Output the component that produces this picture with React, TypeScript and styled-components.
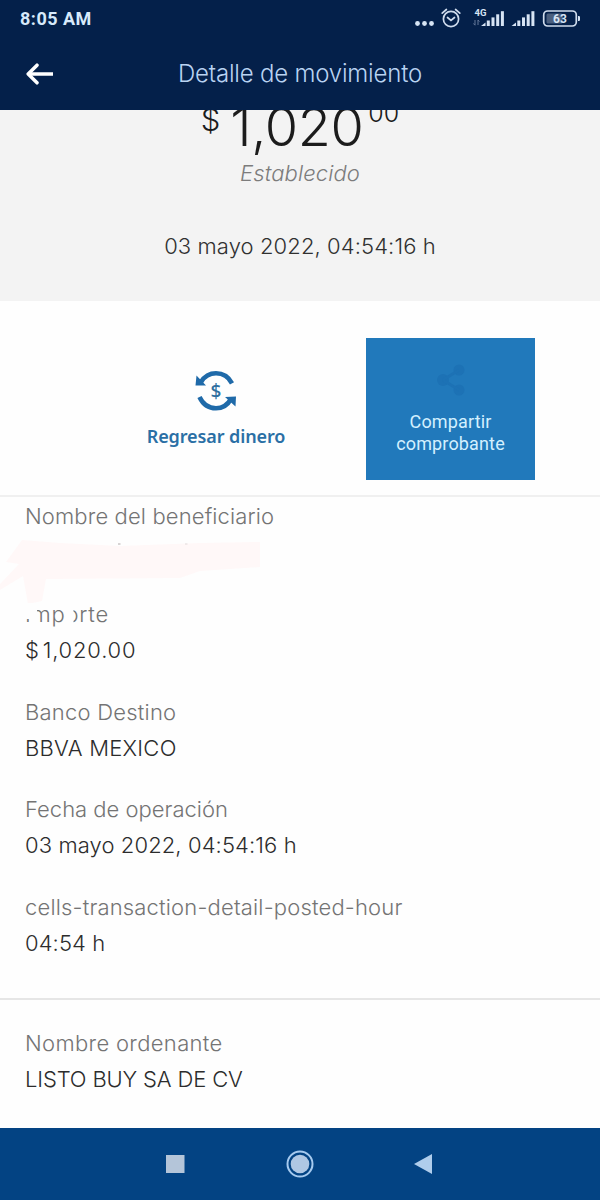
import React from 'react';
import styled, { createGlobalStyle } from 'styled-components';

const Global = createGlobalStyle`
  * { box-sizing: border-box; }
  body { margin: 0; background: #fff; font-family: Inter, "Open Sans", sans-serif; font-weight: 300; }
`;

const Screen = styled.div`
  width: 600px;
  height: 1200px;
  display: flex;
  flex-direction: column;
  overflow: hidden;
  background: #fefefe;
`;

const StatusBar = styled.div`
  height: 38px;
  flex: none;
  display: flex;
  align-items: center;
  justify-content: space-between;
  padding: 0 20px;
  background: #04204a;
  color: #d7e9fb;
`;

const Clock = styled.span`
  font: 700 18px/38px Roboto, sans-serif;
  letter-spacing: 0.5px;
`;

const Header = styled.header`
  height: 72px;
  flex: none;
  display: grid;
  grid-template-columns: 100px 400px 100px;
  align-items: center;
  background: #04204a;
`;

const BackButton = styled.button`
  width: 80px;
  height: 48px;
  padding: 0;
  border: 0;
  background: none;
  display: grid;
  place-items: center;
`;

const Line = styled.span<{ $spacing?: number }>`
  display: block;
  white-space: nowrap;
  letter-spacing: ${p => p.$spacing ?? 0}px;
`;

const Title = styled(Line)`
  font-size: 24px;
  line-height: 30px;
  color: #b9d3f2;
  text-align: center;
`;

const Summary = styled.section`
  height: 191px;
  flex: none;
  display: flex;
  flex-direction: column;
  align-items: center;
  overflow: hidden;
  background: #f3f3f3;
`;

const Amount = styled.div`
  display: flex;
  height: 72px;
  margin-top: -24px;
  line-height: 72px;
  color: #1c1c1c;
`;

const AmountPart = styled(Line)<{ $size: number; $offset: number; $gap?: number }>`
  font-size: ${p => p.$size}px;
  margin-top: ${p => p.$offset}px;
  margin-right: ${p => p.$gap ?? 0}px;
`;

const Status = styled(Line)`
  font-size: 22px;
  font-style: italic;
  line-height: 30px;
  color: #7c7c7c;
`;

const Moment = styled(Line)`
  margin-top: 43px;
  font-size: 22px;
  line-height: 30px;
  color: #303030;
`;

const Actions = styled.section`
  height: 196px;
  flex: none;
  display: flex;
  gap: 66px;
  padding: 37px 0 0 132px;
  border-bottom: 2px solid #f0f0f0;
`;

const Action = styled.button<{ $filled?: boolean }>`
  width: ${p => (p.$filled ? 169 : 168)}px;
  height: 142px;
  border: 0;
  padding: ${p => (p.$filled ? 25 : 32)}px 0 0;
  display: flex;
  flex-direction: column;
  align-items: center;
  gap: ${p => (p.$filled ? 14 : 13)}px;
  background: ${p => (p.$filled ? '#2179bb' : 'transparent')};
  color: ${p => (p.$filled ? '#d3f0ff' : '#2a6fa5')};
  font-family: ${p => (p.$filled ? 'Roboto' : '"Noto Sans"')}, sans-serif;
  font-size: 18px;
  font-weight: ${p => (p.$filled ? 400 : 600)};
  line-height: 22px;
  letter-spacing: ${p => (p.$filled ? 0.15 : -0.1)}px;
`;

const Details = styled.section<{ $top: number; $height: number }>`
  position: relative;
  flex: none;
  height: ${p => p.$height}px;
  padding: ${p => p.$top}px 25px 0;
  display: flex;
  flex-direction: column;
  gap: 25.8px;
`;

const Divider = styled.hr`
  width: 100%;
  height: 2px;
  flex: none;
  margin: 0;
  border: 0;
  background: #e6e6e6;
`;

const Field = styled.div`
  height: 72px;
  font-size: 22px;
  line-height: 36px;
`;

const Label = styled(Line)`
  color: #747474;
`;

const Value = styled(Line)`
  color: #2c2c2c;
`;

const Currency = styled.span`
  margin-right: 3px;
`;

const Smudge = styled.svg`
  position: absolute;
  left: 0;
  top: 34px;
`;

const NavBar = styled.nav`
  height: 72px;
  flex: none;
  display: flex;
  align-items: center;
  justify-content: space-between;
  padding: 0 167px 0 165px;
  background: #034383;
`;

const bars = (x: number) => (
  <g>
    <path d={`M${x} 26l4.500-3.500v3.500z`} />
    {[0, 1, 2, 3].map(i => (
      <rect key={i} x={x + 5.8 + i * 4.7} y={20.5 - i * 3.1} width="3" height={5.5 + i * 3.1} />
    ))}
  </g>
);

const StatusIcons = () => (
  <svg width="168" height="38" viewBox="412 0 168 38" fill="#d7e4f4">
    <circle cx="417.5" cy="23.5" r="2.4" />
    <circle cx="424.5" cy="23.5" r="2.4" />
    <circle cx="431.5" cy="23.5" r="2.4" />
    <g fill="none" stroke="#d0dced" strokeWidth="1.7" strokeLinecap="round">
      <circle cx="451" cy="19" r="7.6" />
      <path d="M447.5 17.5l3.5 3 3.5-3M442.2 13.2l4.2-3.7M459.8 13.2l-4.2-3.7" />
    </g>
    <text x="474.5" y="16" fontFamily="Roboto" fontWeight="700" fontSize="9.5">4G</text>
    <path d="M475 20v5M473.5 23.5l1.5 1.8M478 25v-5M478 20l1.4 1.6" stroke="#64789a" strokeWidth="1" fill="none" />
    {bars(481)}
    {bars(511.5)}
    <rect x="543.7" y="11" width="32.6" height="15" rx="4" fill="none" stroke="#d0dced" strokeWidth="1.7" />
    <rect x="546.5" y="13.5" width="16" height="10" rx="1.5" fill="#4b5f7e" />
    <path d="M578 16h1a1.5 1.5 0 0 1 1 1v3a1.5 1.5 0 0 1-1 1h-1z" />
    <text x="560" y="22.8" textAnchor="middle" fontFamily="Roboto" fontWeight="700" fontSize="12">63</text>
  </svg>
);

const ReturnIcon = () => (
  <svg width="42" height="42" viewBox="0 0 42 42" fill="none">
    <g stroke="#1f6aa9" strokeWidth="4.6">
      <path d="M6 12C10 5.5 15 3.3 21 3.3c7 0 12.500 3.500 16 10" />
      <path d="M36 29c-4 7-9 9.300-15 9.300C13.500 38.300 8 34.500 4.500 27" />
    </g>
    <path d="M1.500 5.500L.5 15.500l10.500 0zM40.500 36.500l.5-10L30 27z" fill="#1f6aa9" />
    <text x="21" y="27.500" textAnchor="middle" fontFamily="Noto Sans" fontWeight="500" fontSize="19" fill="#2f6f9f">$</text>
  </svg>
);

const ShareIcon = () => (
  <svg width="34" height="34" viewBox="0 0 34 34" fill="#1d72b5">
    <circle cx="25" cy="7" r="5.500" />
    <circle cx="9" cy="17" r="6" />
    <circle cx="25" cy="27" r="5.500" />
    <path d="M9 17L25 7M9 17l16 10" stroke="#1d72b5" strokeWidth="3" />
  </svg>
);

export default function App() {
  return (
    <Screen>
      <Global />
      <StatusBar>
        <Clock>8:05 AM</Clock>
        <StatusIcons />
      </StatusBar>
      <Header>
        <BackButton aria-label="Regresar">
          <svg width="28" height="22" viewBox="0 0 28 22" fill="none" stroke="#fff" strokeWidth="3.500" strokeLinecap="round" strokeLinejoin="round">
            <path d="M11 2.200L2.200 11l8.800 8.800" />
            <path d="M3 11h24" strokeLinecap="butt" />
          </svg>
        </BackButton>
        <Title $spacing={-0.2}>Detalle de movimiento</Title>
      </Header>
      <Summary>
        <Amount>
          <AmountPart $size={31} $offset={-2} $gap={10}>$</AmountPart>
          <AmountPart $size={54} $offset={5} $gap={5} $spacing={-0.4}>1,020</AmountPart>
          <AmountPart $size={25} $offset={-9}>00</AmountPart>
        </Amount>
        <Status $spacing={0.1}>Establecido</Status>
        <Moment $spacing={0.1}>03 mayo 2022, 04:54:16 h</Moment>
      </Summary>
      <Actions>
        <Action>
          <ReturnIcon />
          <span>Regresar dinero</span>
        </Action>
        <Action $filled>
          <ShareIcon />
          <span>Compartir<br />comprobante</span>
        </Action>
      </Actions>
      <Details $top={1} $height={501}>
        <Field>
          <Label $spacing={0.13}>Nombre del beneficiario</Label>
        </Field>
        <Field>
          <Label $spacing={0.75}>Importe</Label>
          <Value $spacing={0.8}><Currency>$</Currency>1,020.00</Value>
        </Field>
        <Field>
          <Label $spacing={0.22}>Banco Destino</Label>
          <Value $spacing={0.25}>BBVA MEXICO</Value>
        </Field>
        <Field>
          <Label>Fecha de operación</Label>
          <Value $spacing={0.1}>03 mayo 2022, 04:54:16 h</Value>
        </Field>
        <Field>
          <Label $spacing={0.17}>cells-transaction-detail-posted-hour</Label>
          <Value $spacing={0.1}>04:54 h</Value>
        </Field>
        <Smudge width="300" height="100" viewBox="0 531 300 100">
          <path d="M6 562L22 540l38 3 60 3 80-3 60-1v25l-60 4-20 7-134 1-4 22-14 3-5-28-23 14v-6l19-20z" fill="#fff8f8" />
          <path d="M23 603h8v16h-8zM30 603h7v22h-7zM66 606h7.500v17H66z" fill="#fefefe" />
          <path d="M118 543.500h2.500v1h-2.500z" fill="#b0aaaa" />
          <path d="M185 543.500h2.500v1h-2.500z" fill="#e0dada" />
        </Smudge>
      </Details>
      <Divider />
      <Details $top={25} $height={128}>
        <Field>
          <Label $spacing={0.33}>Nombre ordenante</Label>
          <Value $spacing={-0.15}>LISTO BUY SA DE CV</Value>
        </Field>
      </Details>
      <NavBar>
        <svg width="20" height="20"><rect x="1" y="1" width="18.500" height="18" fill="#b4c5d9" /></svg>
        <svg width="30" height="28" viewBox="0 0 30 28" fill="#afc7e3">
          <circle cx="16" cy="14" r="9.300" />
          <circle cx="16" cy="14" r="12.500" fill="none" stroke="#a6caef" strokeWidth="2" />
        </svg>
        <svg width="20" height="22"><path d="M1 11L19 1v20z" fill="#afcdec" /></svg>
      </NavBar>
    </Screen>
  );
}
